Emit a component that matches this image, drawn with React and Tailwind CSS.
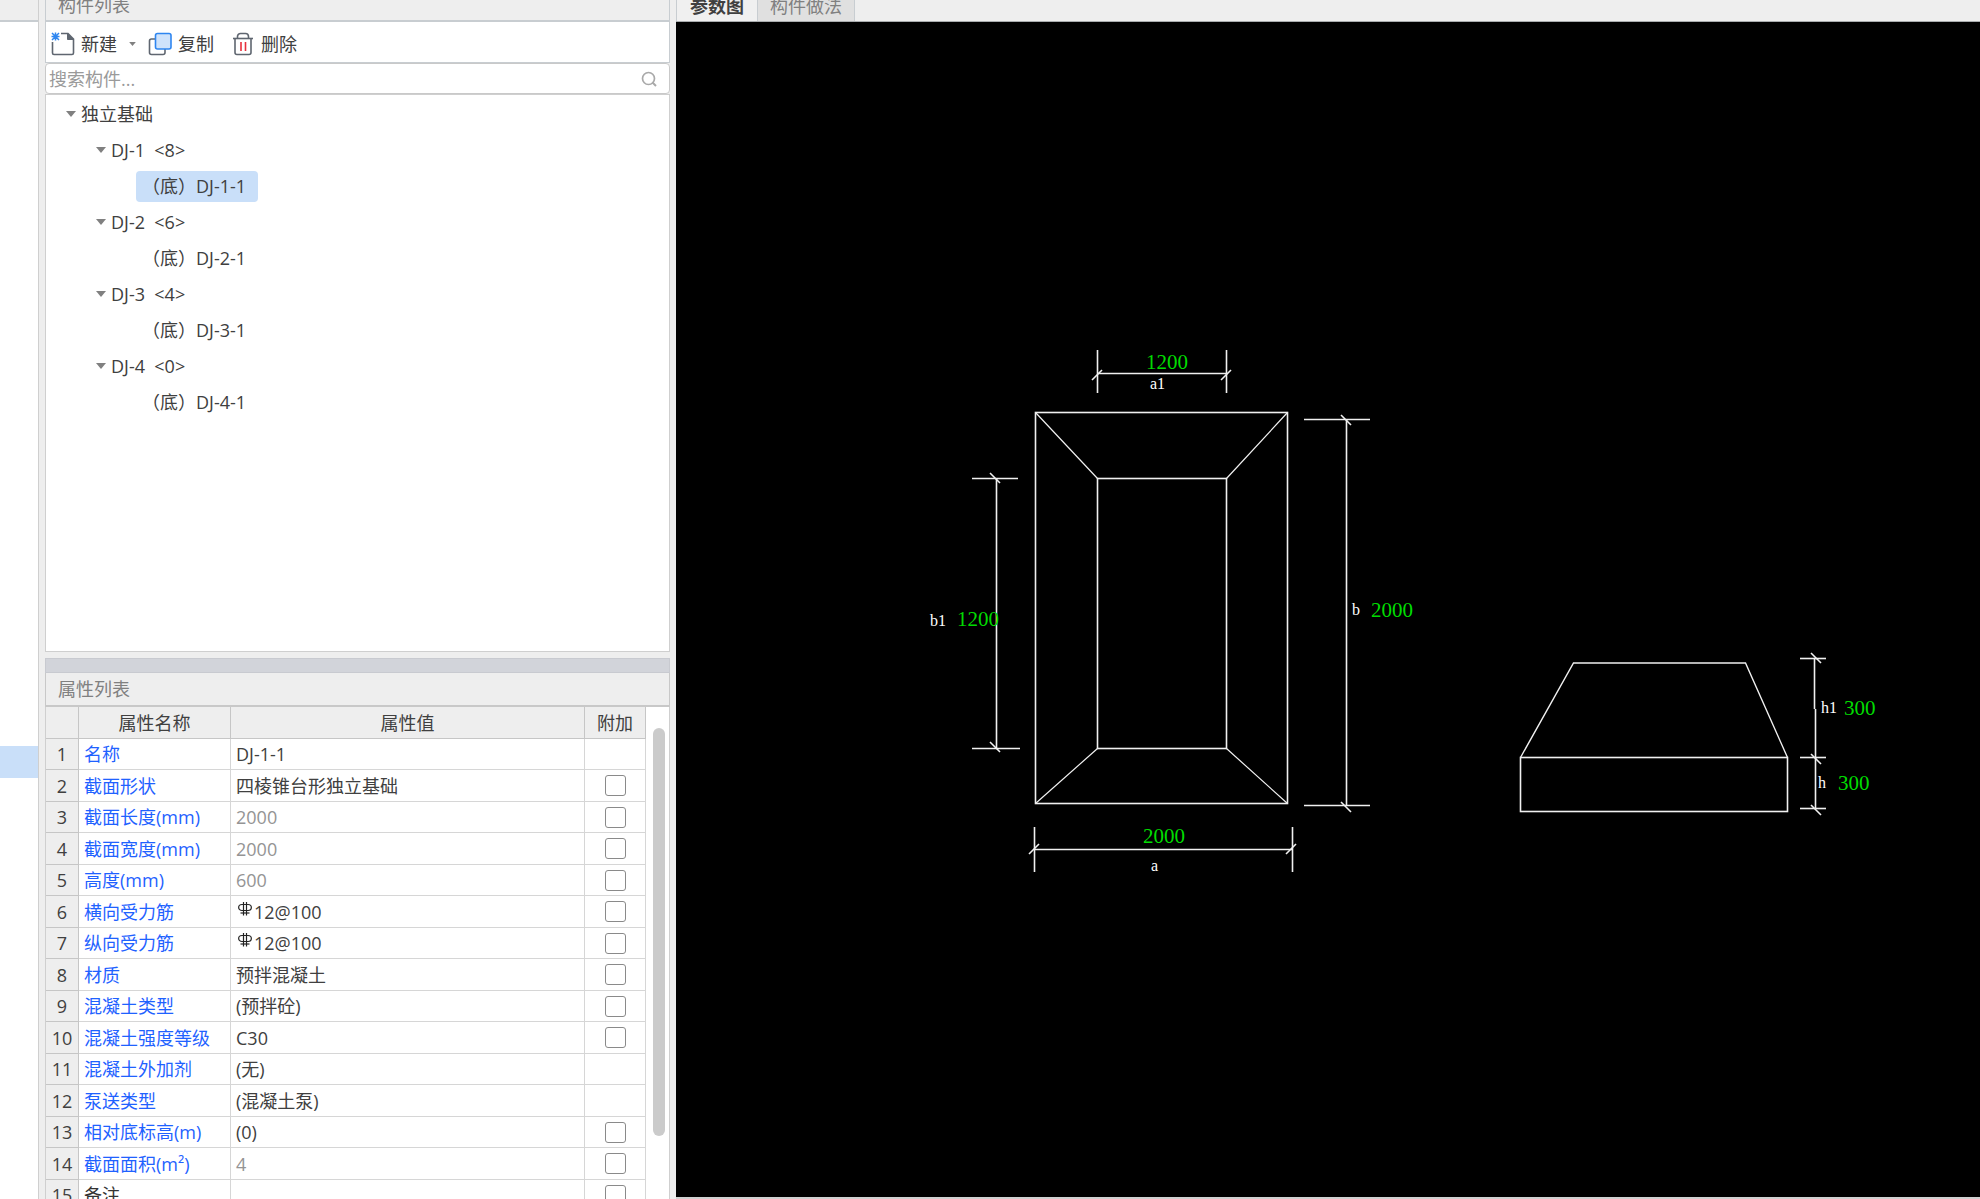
import { useState } from "react";

const components = [
  { name: "DJ-1", count: 8, unit: "DJ-1-1" },
  { name: "DJ-2", count: 6, unit: "DJ-2-1" },
  { name: "DJ-3", count: 4, unit: "DJ-3-1" },
  { name: "DJ-4", count: 0, unit: "DJ-4-1" },
];

const properties = [
  { name: "名称", value: "DJ-1-1" },
  { name: "截面形状", value: "四棱锥台形独立基础", extra: true },
  { name: "截面长度(mm)", value: "2000", extra: true, muted: true },
  { name: "截面宽度(mm)", value: "2000", extra: true, muted: true },
  { name: "高度(mm)", value: "600", extra: true, muted: true },
  { name: "横向受力筋", value: "12@100", extra: true, rebar: true },
  { name: "纵向受力筋", value: "12@100", extra: true, rebar: true },
  { name: "材质", value: "预拌混凝土", extra: true },
  { name: "混凝土类型", value: "(预拌砼)", extra: true },
  { name: "混凝土强度等级", value: "C30", extra: true },
  { name: "混凝土外加剂", value: "(无)" },
  { name: "泵送类型", value: "(混凝土泵)" },
  { name: "相对底标高(m)", value: "(0)", extra: true },
  { name: "截面面积(m²)", value: "4", extra: true, muted: true },
  { name: "备注", value: "", extra: true, plain: true },
];

function NewIcon() {
  return (
    <svg className="w-6 h-6" viewBox="0 0 24 24" fill="none">
      <path d="M1.5 10V21a1.5 1.5 0 001.5 1.5h18a1.5 1.5 0 001.5-1.5V7L17 1.500H10" stroke="#5f6670" strokeWidth="1.6" />
      <path d="M16.500 1.500V7.500H22.500z" fill="#5f6670" stroke="#5f6670" />
      <path d="M4.500 0.500v8M0.500 4.500h8M1 1l7 7M8 1l-7 7" stroke="#2f86f0" strokeWidth="1.5" />
    </svg>
  );
}

function CopyIcon() {
  return (
    <svg className="w-6 h-6" viewBox="0 0 24 24" fill="none">
      <rect x="1.5" y="7" width="15.500" height="15.500" rx="2" stroke="#5f6670" strokeWidth="1.6" />
      <rect x="7.500" y="1.500" width="15.500" height="15.500" rx="2" fill="#cfe3fb" stroke="#2f86f0" strokeWidth="1.6" />
    </svg>
  );
}

function DeleteIcon() {
  return (
    <svg className="w-6 h-6" viewBox="0 0 24 24" fill="none">
      <path d="M2 6.500h20" stroke="#5f6670" strokeWidth="1.6" />
      <path d="M6.500 6V4.500a3 3 0 013-3h5a3 3 0 013 3V6" stroke="#5f6670" strokeWidth="1.6" />
      <path d="M4 6.500V20.500a2 2 0 002 2h12a2 2 0 002-2V6.500" stroke="#5f6670" strokeWidth="1.6" />
      <path d="M10 10v9M14.500 10v9" stroke="#e8303c" strokeWidth="1.6" />
    </svg>
  );
}

function SearchIcon() {
  return (
    <svg className="w-4 h-4" viewBox="0 0 16 16" fill="none">
      <circle cx="7.500" cy="7.500" r="6" stroke="#a9a9a9" strokeWidth="1.700" />
      <path d="M11.500 11.500l3.500 3.500" stroke="#a9a9a9" strokeWidth="2" />
    </svg>
  );
}

function Caret({ className }) {
  return (
    <svg className={className} viewBox="0 0 10 6">
      <path d="M0 0h10L5 6z" fill="#808080" />
    </svg>
  );
}

function RebarIcon() {
  return (
    <svg className="w-[14px] h-[14px]" viewBox="0 0 14 14" fill="none" stroke="#222" strokeWidth="1.2">
      <path d="M5.500 0v13.500M8.500 0v13.500" />
      <path d="M4 2.500h6a3 2.700 0 010 6h-6a3 2.700 0 010-6z" />
      <path d="M2.500 11h9" />
    </svg>
  );
}

function TreeToggle({ label, className }) {
  return (
    <button className={`flex h-9 items-center gap-[5px] whitespace-pre ${className}`}>
      <Caret className="w-[10px] h-[6px]" />
      {label}
    </button>
  );
}

function ComponentPanel() {
  const [selected, setSelected] = useState("DJ-1-1");

  return (
    <section className="flex shrink-0 flex-col">
      <header className="flex h-[22px] items-end overflow-hidden border-x border-b-2 border-[#c8cdd1] bg-[#eeeeee] pl-3">
        <h2 className="leading-[30px] text-[#808080]">构件列表</h2>
      </header>

      <div className="flex h-[41px] items-center border-x border-b border-[#c8cdd1] bg-white pl-[5px] pt-[3px]">
        <button className="flex items-center gap-[6px]">
          <NewIcon />
          新建
        </button>
        <button aria-label="新建选项" className="ml-3">
          <Caret className="w-[7px] h-[4px]" />
        </button>
        <button className="ml-3 flex items-center gap-[6px]">
          <CopyIcon />
          复制
        </button>
        <button className="ml-[17px] flex items-center gap-[6px]">
          <DeleteIcon />
          删除
        </button>
      </div>

      <label className="flex h-[31px] items-center rounded-[4px] border border-[#c9c9c9] bg-white pl-[3px] pr-3">
        <input
          type="text"
          aria-label="搜索构件"
          placeholder="搜索构件..."
          className="min-w-0 flex-1 bg-transparent outline-none placeholder:text-[#9a9a9a]"
        />
        <SearchIcon />
      </label>

      <div className="h-[558px] border border-[#cfcfcf] bg-white pl-5 pt-px">
        <TreeToggle label="独立基础" className="" />
        <ul>
          {components.map(({ name, count, unit }) => (
            <li key={name}>
              <TreeToggle label={`${name}  <${count}>`} className="pl-[30px]" />
              <div className="flex h-9 items-center pl-[70px]">
                <button
                  onClick={() => setSelected(unit)}
                  className={`h-[31px] rounded-[4px] pl-[6px] pr-3 ${
                    selected === unit ? "bg-[#c9dff9]" : ""
                  }`}
                >
                  （底）{unit}
                </button>
              </div>
            </li>
          ))}
        </ul>
      </div>
    </section>
  );
}

function PropertyPanel() {
  return (
    <section className="mt-[6px] flex min-h-0 flex-1 flex-col">
      <div className="h-[15px] shrink-0 border border-[#c8cad0] bg-[#d2d4da]" />
      <header className="flex h-[34px] shrink-0 items-center border-x border-b-2 border-[#c8c8c8] bg-[#eeeeee] pl-3">
        <h2 className="text-[#808080]">属性列表</h2>
      </header>

      <div className="flex min-h-0 flex-1 overflow-hidden border-x border-[#cfcfcf] bg-white">
        <table className="h-fit flex-1 table-fixed border-separate border-spacing-0">
          <colgroup>
            <col className="w-[33px]" />
            <col className="w-[152px]" />
            <col />
            <col className="w-[61px]" />
          </colgroup>
          <thead>
            <tr className="h-8 bg-[#eeeeee]">
              <th className="border-b border-r border-[#c6c6c6] p-0" />
              <th className="border-b border-r border-[#c6c6c6] p-0 font-normal">属性名称</th>
              <th className="border-b border-r border-[#c6c6c6] p-0 font-normal">属性值</th>
              <th className="border-b border-r border-[#c6c6c6] p-0 font-normal">附加</th>
            </tr>
          </thead>
          <tbody>
            {properties.map((p, i) => (
              <tr key={p.name} className="odd:h-[31px] even:h-8">
                <td className="border-b border-r border-[#c6c6c6] bg-[#eeeeee] p-0 text-center">{i + 1}</td>
                <td
                  className={`whitespace-nowrap border-b border-r border-[#d6d6d6] py-0 pl-[5px] pr-0 ${
                    p.plain ? "text-[#333333]" : "text-[#1f62ff]"
                  }`}
                >
                  {p.name}
                </td>
                <td
                  className={`border-b border-r border-[#d6d6d6] py-0 pl-[5px] pr-0 ${
                    p.muted ? "text-[#949494]" : "text-[#404040]"
                  }`}
                >
                  <span className="flex gap-[2px]">
                    {p.rebar && <span className="pl-[2px] pt-[2px]"><RebarIcon /></span>}
                    {p.value}
                  </span>
                </td>
                <td className="border-b border-r border-[#d6d6d6] p-0">
                  {p.extra && (
                    <input
                      type="checkbox"
                      aria-label={`附加 ${p.name}`}
                      className="mx-auto block h-[21px] w-[21px] appearance-none rounded-[3px] border border-[#8a8a8a] bg-white checked:bg-[#2f86f0]"
                    />
                  )}
                </td>
              </tr>
            ))}
          </tbody>
        </table>
        <div className="w-[23px] shrink-0 pl-[7px] pt-[21px]">
          <div className="h-[408px] w-3 rounded-full bg-[#cbcbcb]" />
        </div>
      </div>
    </section>
  );
}

// dimension lines: [x1, y1, x2, y2]
const dimensionLines = [
  // a1
  [421.5, 328, 421.5, 371],
  [550.5, 328, 550.5, 371],
  [421.5, 351.5, 550.5, 351.5],
  [416, 358, 426, 348],
  [545, 358, 555, 348],
  // b1
  [296, 456.5, 342, 456.5],
  [296, 726.5, 344, 726.5],
  [320.5, 456.5, 320.5, 726.5],
  [314, 451, 324, 461],
  [314, 720, 324, 730],
  // b
  [628, 397.5, 694, 397.5],
  [628, 783.5, 694, 783.5],
  [670.5, 397.5, 670.5, 783.5],
  [665, 393, 675, 403],
  [665, 780, 675, 790],
  // a
  [358.5, 805, 358.5, 850],
  [616.5, 805, 616.5, 850],
  [358.5, 827.5, 616.5, 827.5],
  [353, 832, 363, 822],
  [610, 832, 620, 822],
  // h1 and h
  [1124, 636.5, 1150, 636.5],
  [1124, 735.5, 1150, 735.5],
  [1124, 786.5, 1150, 786.5],
  [1138.5, 636.5, 1138.5, 687],
  [1139.5, 687, 1139.5, 786.5],
  [1135, 631, 1145, 641],
  [1135, 732, 1145, 742],
  [1135, 783, 1145, 793],
];

const dimensionTexts = [
  { label: "a1", lx: 474, ly: 367, value: "1200", x: 470, y: 347 },
  { label: "b1", lx: 254, ly: 604, value: "1200", x: 281, y: 604 },
  { label: "b", lx: 676, ly: 593, value: "2000", x: 695, y: 595 },
  { label: "a", lx: 475, ly: 849, value: "2000", x: 467, y: 821 },
  { label: "h1", lx: 1145, ly: 691, value: "300", x: 1168, y: 693 },
  { label: "h", lx: 1142, ly: 766, value: "300", x: 1162, y: 768 },
];

function FoundationDrawing() {
  return (
    <svg
      className="h-full w-full font-['Liberation_Serif',serif]"
      viewBox="0 0 1304 1175"
      preserveAspectRatio="xMinYMin meet"
    >
      <g fill="none" stroke="#f0f0f0" strokeWidth="1.6">
        {/* plan */}
        <rect x="359.5" y="390.5" width="252" height="391" />
        <rect x="421.5" y="456.5" width="129" height="270" />
        <path d="M359.5 390.5L421.5 456.5M611.5 390.5L550.5 456.5M359.5 781.5L421.5 726.5M611.5 781.5L550.5 726.5" strokeWidth="1.2" />
        {/* elevation */}
        <rect x="844.5" y="735.5" width="267" height="54" />
        <path d="M844.5 735.5L897.5 641H1069.5L1111.5 735.5" strokeWidth="1.4" />
        {dimensionLines.map(([x1, y1, x2, y2]) => (
          <line key={`${x1}-${y1}-${x2}-${y2}`} x1={x1} y1={y1} x2={x2} y2={y2} />
        ))}
      </g>
      {dimensionTexts.map((t) => (
        <g key={t.label}>
          <text x={t.lx} y={t.ly} fill="#ffffff" fontSize="16">{t.label}</text>
          <text x={t.x} y={t.y} fill="#00dc00" fontSize="21">{t.value}</text>
        </g>
      ))}
    </svg>
  );
}

function DrawingPanel() {
  return (
    <main className="flex min-w-0 flex-1 flex-col">
      <div className="flex h-[22px] shrink-0 items-end overflow-hidden border-b border-[#a9acae] bg-[#eeeeee]">
        <button className="h-[31px] border-x border-[#c8cdd1] bg-[#f0f0f0] px-[13px] font-bold leading-[30px]">参数图</button>
        <button className="h-[31px] border-r border-[#c8cdd1] bg-[#e0e0e0] px-3 leading-[30px] text-[#808080]">构件做法</button>
      </div>
      <div className="min-h-0 flex-1 bg-black">
        <FoundationDrawing />
      </div>
      <div className="h-[2px] shrink-0 bg-[#d0d0d0]" />
    </main>
  );
}

export default function App() {
  return (
    <div className="flex h-screen overflow-hidden bg-[#eeeeee] font-['Open_Sans','Noto_Sans_CJK_SC',sans-serif] text-[18px] leading-6 text-[#404040]">
      <div className="mr-[6px] w-[39px] shrink-0 border-r border-[#cfcfcf] bg-white">
        <div className="h-[22px] border-b-2 border-[#c8cdd1] bg-[#eeeeee]" />
        <div className="mt-[724px] h-8 bg-[#c9dff9]" />
      </div>
      <aside className="mr-[6px] flex w-[625px] shrink-0 flex-col">
        <ComponentPanel />
        <PropertyPanel />
      </aside>
      <DrawingPanel />
    </div>
  );
}
